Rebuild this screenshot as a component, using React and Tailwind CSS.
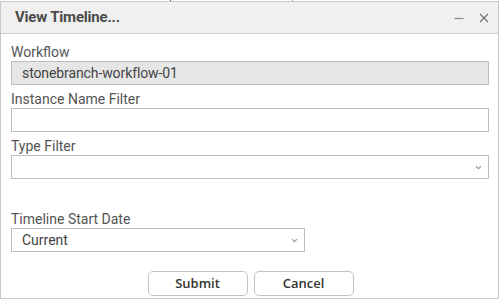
import React from "react";

const Chevron = () => (
  <svg width="7" height="5" viewBox="0 0 7 5" className="shrink-0">
    <polyline points="1,1.2 3.5,3.7 6,1.2" fill="none" stroke="#999" strokeWidth="1.2" />
  </svg>
);

export default function App() {
  const font = { fontFamily: "Roboto, 'Liberation Sans', sans-serif" };
  return (
    <div className="relative w-[500px] h-[303px] bg-white" style={font}>
      <div className="absolute left-[170px] top-0 w-px h-px bg-[#555]" />
      <div className="absolute left-[292px] top-0 w-px h-px bg-[#999]" />
      <div className="pt-px">
        <div className="w-[499px] h-[298px] border border-[#c8c8c8] flex flex-col">
          <div className="h-[32px] bg-[#f0f0f0] border-b border-[#cfcfcf] flex items-center pl-[14px] shrink-0">
            <span className="text-[15px] font-bold text-[#4a4a4a] tracking-[-0.2px]">View Timeline...</span>
            <div className="ml-auto flex items-center gap-[15px] pr-[9px]">
              <svg width="10" height="10" viewBox="0 0 10 10">
                <line x1="0.5" y1="5.5" x2="9.5" y2="5.5" stroke="#8a8a8a" strokeWidth="1.2" />
              </svg>
              <svg width="10" height="10" viewBox="0 0 10 10">
                <line x1="1" y1="1" x2="9" y2="9" stroke="#777" strokeWidth="1.2" />
                <line x1="9" y1="1" x2="1" y2="9" stroke="#777" strokeWidth="1.2" />
              </svg>
            </div>
          </div>
          <div className="flex flex-col pl-[10px] pr-[9px] text-[14px] text-[#555]">
            <div className="mt-[10px] leading-[16px]">Workflow</div>
            <div className="mt-px h-[24px] border border-[#bdbdbd] bg-[#e6e6e6] flex items-center pl-[10px] text-[#444] tracking-[-0.1px]">
              stonebranch-workflow-01
            </div>
            <div className="mt-[6px] leading-[16px]">Instance Name Filter</div>
            <div className="mt-px h-[24px] border border-[#bdbdbd] bg-white" />
            <div className="mt-[6px] leading-[16px]">Type Filter</div>
            <div className="mt-px h-[24px] border border-[#bdbdbd] bg-white flex items-center justify-end pr-[6px]">
              <Chevron />
            </div>
            <div className="mt-[32px] leading-[16px]">Timeline Start Date</div>
            <div className="mt-px h-[24px] w-[294px] border border-[#bdbdbd] bg-white flex items-center pl-[10px] pr-[6px] text-[#444]">
              <span>Current</span>
              <span className="ml-auto"><Chevron /></span>
            </div>
            <div className="mt-[19px] flex justify-center gap-[6px] pl-[1px]" style={{ fontFamily: "'Open Sans', 'Noto Sans', sans-serif" }}>
              <button className="w-[100px] h-[25px] rounded-[5px] border border-[#c4c4c4] bg-white text-[13px] font-[550] text-[#333]">Submit</button>
              <button className="w-[100px] h-[25px] rounded-[5px] border border-[#c4c4c4] bg-white text-[13px] font-[550] text-[#333]">Cancel</button>
            </div>
          </div>
        </div>
      </div>
    </div>
  );
}
